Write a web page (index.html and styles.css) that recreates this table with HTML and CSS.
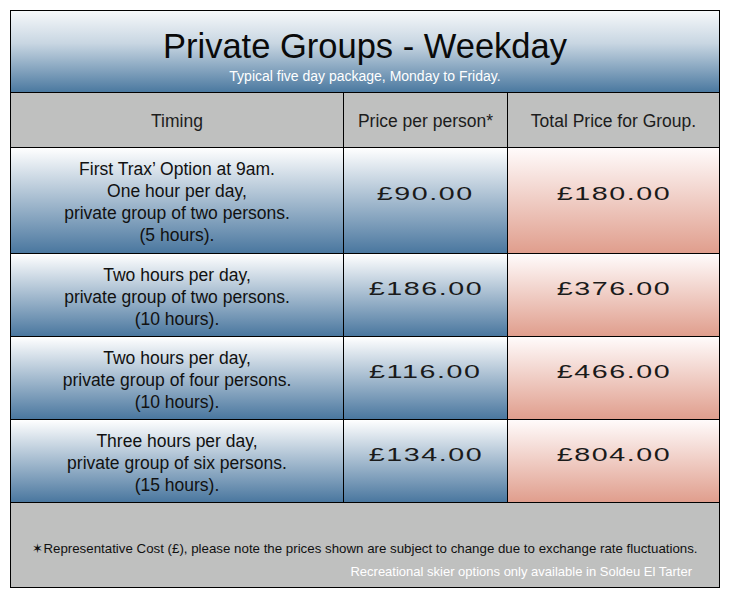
FILE: index.html
```html
<!DOCTYPE html>
<html lang="en">
<head>
<meta charset="utf-8">
<title>Private Groups - Weekday</title>
<link rel="stylesheet" href="styles.css">
</head>
<body>
<div class="card">
  <div class="head">
    <h1 class="title">Private Groups - Weekday</h1>
    <p class="subtitle">Typical five day package, Monday to Friday.</p>
  </div>
  <div class="grid">
    <div class="th">Timing</div>
    <div class="th">Price per person*</div>
    <div class="th">Total Price for Group.</div>

    <div class="cell blue desc">First Trax’ Option at 9am.<br>One hour per day,<br>private group of two persons.<br>(5 hours).</div>
    <div class="cell blue price"><span class="num">£90.00</span></div>
    <div class="cell pink price"><span class="num">£180.00</span></div>

    <div class="cell blue desc">Two hours per day,<br>private group of two persons.<br>(10 hours).</div>
    <div class="cell blue price"><span class="num">£186.00</span></div>
    <div class="cell pink price"><span class="num">£376.00</span></div>

    <div class="cell blue desc">Two hours per day,<br>private group of four persons.<br>(10 hours).</div>
    <div class="cell blue price"><span class="num">£116.00</span></div>
    <div class="cell pink price"><span class="num">£466.00</span></div>

    <div class="cell blue desc">Three hours per day,<br>private group of six persons.<br>(15 hours).</div>
    <div class="cell blue price"><span class="num">£134.00</span></div>
    <div class="cell pink price"><span class="num">£804.00</span></div>
  </div>
  <div class="foot">
    <p class="note">✶Representative Cost (£), please note the prices shown are subject to change due to exchange rate fluctuations.</p>
    <p class="note2">Recreational skier options only available in Soldeu El Tarter</p>
  </div>
</div>
</body>
</html>
```
FILE: styles.css
```css
html, body {
  margin: 0;
  padding: 0;
  background: #ffffff;
}
body {
  padding: 10px;
  font-family: "Liberation Sans", Arial, sans-serif;
  color: #151515;
}
.card {
  width: 708px;
  border: 1px solid #000;
  background: #bfc0bf;
}
.head {
  height: 81px;
  border-bottom: 1px solid #000;
  background: linear-gradient(to bottom, #f6f8fa 0%, #c8d6e2 40%, #4b79a0 100%);
  text-align: center;
  display: flex;
  flex-direction: column;
  align-items: center;
}
.title {
  margin: 17px 0 0 0;
  font-weight: normal;
  font-size: 34.5px;
  line-height: 36px;
  color: #0a0a0a;
}
.subtitle {
  margin: 4px 0 0 0;
  font-size: 14px;
  line-height: 16px;
  color: #ffffff;
}
.grid {
  display: grid;
  grid-template-columns: 332px 163px 211px;
  grid-template-rows: 54px 105px 82px 82px 82px;
  gap: 1px;
  background: #000;
  border-bottom: 1px solid #000;
}
.th {
  background: #bfc0bf;
  display: flex;
  align-items: center;
  justify-content: center;
  font-size: 17.5px;
  color: #1c1c1c;
  padding-top: 2px;
}
.cell {
  display: flex;
  align-items: center;
  justify-content: center;
  text-align: center;
}
.blue {
  background: linear-gradient(to bottom, #ffffff 0%, #4a779f 100%);
}
.pink {
  background: linear-gradient(to bottom, #fffbfb 0%, #e09e8d 100%);
}
.desc {
  font-size: 17.5px;
  line-height: 22px;
  color: #111;
  padding-top: 3px;
}
.price {
  padding-bottom: 13px;
}
.num {
  display: inline-block;
  font-size: 18.5px;
  letter-spacing: 1px;
  transform: scaleX(1.55);
  color: #1a1a1a;
}
.foot {
  height: 84px;
  display: flex;
  flex-direction: column;
  align-items: center;
  justify-content: flex-end;
}
.note {
  margin: 0;
  font-size: 13.3px;
  line-height: 16px;
  color: #111;
}
.note2 {
  align-self: flex-end;
  margin: 8px 27px 8px 0;
  font-size: 13px;
  line-height: 14px;
  color: #ffffff;
}
```
